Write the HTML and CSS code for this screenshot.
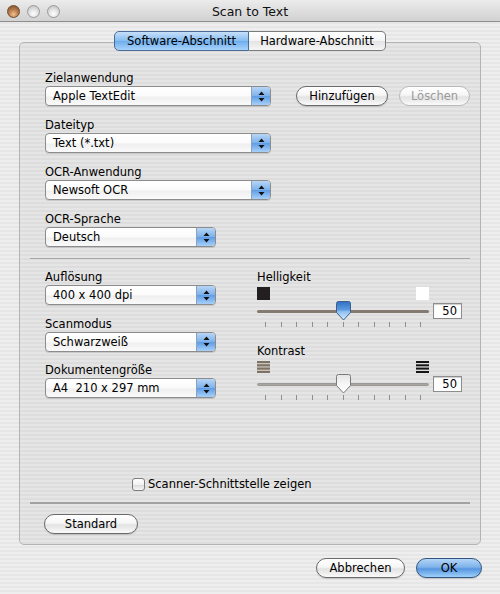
FILE: index.html
```html
<!DOCTYPE html>
<html lang="de">
<head>
<meta charset="utf-8">
<title>Scan to Text</title>
<link rel="stylesheet" href="styles.css">
</head>
<body>
<div class="window">
  <div class="titlebar">
    <div class="lights">
      <span class="light close"></span>
      <span class="light"></span>
      <span class="light"></span>
    </div>
    <div class="title">Scan to Text</div>
    <div></div>
  </div>
  <div class="content">
    <div class="tabs">
      <div class="tab active">Software-Abschnitt</div>
      <div class="tab">Hardware-Abschnitt</div>
    </div>
    <div class="panel">
      <section class="top">
        <div class="field">
          <div class="label">Zielanwendung</div>
          <div class="row">
            <div class="popup wide"><span class="ptext">Apple TextEdit</span><span class="parrow"><svg width="7" height="11" viewBox="0 0 7 11"><path d="M3.5 0.5 L6.5 4 H0.5Z M0.5 7 H6.5 L3.5 10.5Z" fill="#111"/></svg></span></div>
            <button class="btn add">Hinzufügen</button>
            <button class="btn del" disabled>Löschen</button>
          </div>
        </div>
        <div class="field">
          <div class="label">Dateityp</div>
          <div class="popup wide"><span class="ptext">Text (*.txt)</span><span class="parrow"><svg width="7" height="11" viewBox="0 0 7 11"><path d="M3.5 0.5 L6.5 4 H0.5Z M0.5 7 H6.5 L3.5 10.5Z" fill="#111"/></svg></span></div>
        </div>
        <div class="field">
          <div class="label">OCR-Anwendung</div>
          <div class="popup wide"><span class="ptext">Newsoft OCR</span><span class="parrow"><svg width="7" height="11" viewBox="0 0 7 11"><path d="M3.5 0.5 L6.5 4 H0.5Z M0.5 7 H6.5 L3.5 10.5Z" fill="#111"/></svg></span></div>
        </div>
        <div class="field">
          <div class="label">OCR-Sprache</div>
          <div class="popup narrow"><span class="ptext">Deutsch</span><span class="parrow"><svg width="7" height="11" viewBox="0 0 7 11"><path d="M3.5 0.5 L6.5 4 H0.5Z M0.5 7 H6.5 L3.5 10.5Z" fill="#111"/></svg></span></div>
        </div>
      </section>
      <div class="sep"></div>
      <section class="mid">
        <div class="leftcol">
          <div class="field">
            <div class="label">Auflösung</div>
            <div class="popup narrow"><span class="ptext">400 x 400 dpi</span><span class="parrow"><svg width="7" height="11" viewBox="0 0 7 11"><path d="M3.5 0.5 L6.5 4 H0.5Z M0.5 7 H6.5 L3.5 10.5Z" fill="#111"/></svg></span></div>
          </div>
          <div class="field">
            <div class="label">Scanmodus</div>
            <div class="popup narrow"><span class="ptext">Schwarzweiß</span><span class="parrow"><svg width="7" height="11" viewBox="0 0 7 11"><path d="M3.5 0.5 L6.5 4 H0.5Z M0.5 7 H6.5 L3.5 10.5Z" fill="#111"/></svg></span></div>
          </div>
          <div class="field">
            <div class="label">Dokumentengröße</div>
            <div class="popup narrow"><span class="ptext">A4&nbsp; 210 x 297 mm</span><span class="parrow"><svg width="7" height="11" viewBox="0 0 7 11"><path d="M3.5 0.5 L6.5 4 H0.5Z M0.5 7 H6.5 L3.5 10.5Z" fill="#111"/></svg></span></div>
          </div>
        </div>
        <div class="rightcol">
          <div class="slidergroup">
            <div class="label">Helligkeit</div>
            <div class="icons">
              <span class="sq black"></span>
              <span class="sq white"></span>
            </div>
            <div class="sliderrow">
              <div class="slider">
                <div class="track"></div>
                <svg class="thumb" width="15" height="20" viewBox="0 0 15 20">
                  <defs>
                    <linearGradient id="tb" x1="0" y1="0" x2="0" y2="1">
                      <stop offset="0" stop-color="#2f6fc4"/>
                      <stop offset="0.45" stop-color="#5d9be0"/>
                      <stop offset="0.55" stop-color="#8fc0f0"/>
                      <stop offset="1" stop-color="#d6ecff"/>
                    </linearGradient>
                  </defs>
                  <path d="M2.5 0.5 H12.5 Q14.5 0.5 14.5 2.5 V11.5 L7.5 19 L0.5 11.5 V2.5 Q0.5 0.5 2.5 0.5Z" fill="url(#tb)" stroke="#3d5f8a" stroke-width="1"/>
                </svg>
              </div>
              <div class="valbox">50</div>
            </div>
            <div class="ticks"><i></i><i></i><i></i><i></i><i></i><i></i><i></i><i></i><i></i><i></i><i></i></div>
          </div>
          <div class="slidergroup second">
            <div class="label">Kontrast</div>
            <div class="icons">
              <svg width="13" height="12" viewBox="0 0 13 12"><rect x="0" y="0" width="13" height="12" fill="#c9c1b5"/><rect x="0" y="0" width="13" height="2" fill="#7d7266"/><rect x="0" y="3.3" width="13" height="2" fill="#7d7266"/><rect x="0" y="6.6" width="13" height="2" fill="#7d7266"/><rect x="0" y="10" width="13" height="2" fill="#7d7266"/></svg>
              <svg width="13" height="12" viewBox="0 0 13 12"><rect x="0" y="0" width="13" height="2" fill="#151515"/><rect x="0" y="3.3" width="13" height="2" fill="#151515"/><rect x="0" y="6.6" width="13" height="2" fill="#151515"/><rect x="0" y="10" width="13" height="2" fill="#151515"/></svg>
            </div>
            <div class="sliderrow">
              <div class="slider">
                <div class="track light"></div>
                <svg class="thumb" width="15" height="20" viewBox="0 0 15 20">
                  <defs>
                    <linearGradient id="tw" x1="0" y1="0" x2="0" y2="1">
                      <stop offset="0" stop-color="#e4e4e4"/>
                      <stop offset="0.5" stop-color="#f6f6f6"/>
                      <stop offset="1" stop-color="#ffffff"/>
                    </linearGradient>
                  </defs>
                  <path d="M2.5 0.5 H12.5 Q14.5 0.5 14.5 2.5 V11.5 L7.5 19 L0.5 11.5 V2.5 Q0.5 0.5 2.5 0.5Z" fill="url(#tw)" stroke="#7a7a7a" stroke-width="1"/>
                </svg>
              </div>
              <div class="valbox">50</div>
            </div>
            <div class="ticks"><i></i><i></i><i></i><i></i><i></i><i></i><i></i><i></i><i></i><i></i><i></i></div>
          </div>
        </div>
      </section>
      <div class="checkrow">
        <span class="checkbox"></span>
        <span class="checklabel">Scanner-Schnittstelle zeigen</span>
      </div>
      <div class="sep thick"></div>
      <div class="stdrow">
        <button class="btn std">Standard</button>
      </div>
    </div>
    <div class="footer">
      <button class="btn cancel">Abbrechen</button>
      <button class="btn ok">OK</button>
    </div>
  </div>
</div>
</body>
</html>
```

FILE: styles.css
```css
* { box-sizing: border-box; }

html, body {
  margin: 0;
  padding: 0;
}

body {
  width: 500px;
  height: 594px;
  overflow: hidden;
}

.window {
  width: 500px;
  height: 594px;
  font-family: "DejaVu Sans", "Lucida Grande", sans-serif;
  font-size: 11.5px;
  color: #000;
  background: repeating-linear-gradient(to bottom, #eeeeee 0, #eeeeee 2px, #e6e6e6 2px, #e6e6e6 4px);
}

/* Title bar */
.titlebar {
  height: 22px;
  display: grid;
  grid-template-columns: 1fr auto 1fr;
  align-items: center;
  background: linear-gradient(to bottom, #ececec 0%, #dedede 50%, #d2d2d2 100%);
  border-bottom: 1px solid #8e8e8e;
}

.lights {
  display: flex;
  gap: 7px;
  padding-left: 7px;
  padding-top: 1px;
}

.light {
  width: 13px;
  height: 13px;
  border-radius: 50%;
  border: 1px solid #9a9a9a;
  background: radial-gradient(circle at 50% 70%, #ffffff 0%, #e6e6e6 40%, #b9b9b9 100%);
}

.light.close {
  border-color: #6f4a2e;
  background: radial-gradient(circle at 50% 75%, #f3c28d 0%, #b97e4e 45%, #7a4a28 100%);
}

.title {
  font-size: 12.5px;
  color: #111;
  padding-top: 1px;
}

/* Content */
.content {
  padding: 9px 19px 0 19px;
}

.tabs {
  display: flex;
  justify-content: center;
  margin-bottom: -9px;
  position: relative;
  z-index: 1;
}

.tab {
  height: 20px;
  line-height: 18px;
  padding: 0 11px;
  border: 1px solid #7b7b7b;
  background: linear-gradient(to bottom, #ffffff 0%, #f4f4f4 48%, #e4e4e4 52%, #f6f6f6 100%);
  font-size: 11.5px;
  text-align: center;
}

.tab:first-child {
  border-radius: 5px 0 0 5px;
}

.tab:last-child {
  border-radius: 0 5px 5px 0;
  border-left: none;
}

.tab.active {
  background: linear-gradient(to bottom, #c7e0fa 0%, #86bdf0 48%, #6eaeee 52%, #a9d3fb 100%);
  border-color: #4a6b96;
  width: 135px;
}

.tab:not(.active) {
  width: 137px;
}

.panel {
  height: 503px;
  border: 1px solid #b4b4b4;
  border-radius: 5px;
  background: rgba(0, 0, 0, 0.035);
  padding: 27px 10px 0 10px;
}

.label {
  height: 16px;
  line-height: 16px;
  margin-bottom: 0;
  white-space: nowrap;
}

.top {
  padding-left: 15px;
  display: flex;
  flex-direction: column;
  gap: 11px;
}

.row {
  display: flex;
  align-items: center;
}

/* Popup button */
.popup {
  height: 20px;
  display: flex;
  align-items: stretch;
  border: 1px solid #8c8c8c;
  border-radius: 4px;
  background: linear-gradient(to bottom, #ffffff 0%, #fbfbfb 50%, #efefef 55%, #fafafa 100%);
  box-shadow: 0 1px 0 rgba(0,0,0,0.12);
}

.popup.wide { width: 226px; }
.popup.narrow { width: 171px; }

.ptext {
  flex: 1;
  padding-left: 7px;
  line-height: 18px;
  white-space: nowrap;
}

.parrow {
  width: 19px;
  border-left: 1px solid #8aa2bf;
  border-radius: 0 3px 3px 0;
  background: linear-gradient(to bottom, #b7d6f6 0%, #7fb2ea 48%, #5f9de6 52%, #a7d0f8 100%);
  display: flex;
  align-items: center;
  justify-content: center;
}

/* Buttons */
.btn {
  height: 20px;
  border: 1px solid #6a6a6a;
  border-radius: 10px;
  background: linear-gradient(to bottom, #ffffff 0%, #f6f6f6 45%, #e2e2e2 55%, #fafafa 100%);
  font-family: inherit;
  font-size: 11.5px;
  color: #000;
  padding: 0;
  line-height: 17px;
  box-shadow: 0 1px 1px rgba(0,0,0,0.15);
}

.btn.add { width: 92px; margin-left: 25px; }
.btn.del {
  width: 71px;
  margin-left: 11px;
  color: #9a9a9a;
  border-color: #b9b9b9;
  box-shadow: none;
}

.sep {
  height: 1px;
  background: #a6a6a6;
  margin-top: 11px;
}

.sep.thick {
  height: 2px;
  background: #a2a2a2;
  margin-top: 10px;
}

/* Middle */
.mid {
  display: flex;
  padding-left: 15px;
  padding-top: 10px;
}

.leftcol {
  width: 212px;
  display: flex;
  flex-direction: column;
  gap: 10.5px;
}

.rightcol {
  width: 205px;
}

.icons {
  width: 172px;
  height: 13px;
  display: flex;
  justify-content: space-between;
  margin-top: 2px;
}

.sq {
  width: 13px;
  height: 13px;
}

.sq.black { background: #231f20; }
.sq.white { background: #ffffff; }

.sliderrow {
  display: flex;
  align-items: center;
  margin-top: 3px;
  height: 16px;
}

.slider {
  width: 172px;
  height: 16px;
  position: relative;
  display: flex;
  align-items: center;
}

.track {
  width: 100%;
  height: 3px;
  border-radius: 2px;
  background: #857a6f;
}

.track.light {
  background: #a9a49e;
}

.thumb {
  position: absolute;
  left: 79px;
  top: -2px;
}

.valbox {
  width: 29px;
  height: 16px;
  margin-left: 4px;
  background: #ffffff;
  border: 1px solid #8d8d8d;
  box-shadow: inset 0 1px 1px rgba(0,0,0,0.2);
  text-align: right;
  padding-right: 4px;
  line-height: 14px;
}

.ticks {
  width: 172px;
  display: flex;
  justify-content: space-between;
  padding: 0 8px;
  margin-top: 3px;
  height: 5px;
}

.ticks i {
  display: block;
  width: 1px;
  height: 5px;
  background: #8f8f8f;
}

.slidergroup.second {
  margin-top: 16px;
}

.slidergroup.second .icons {
  height: 12px;
}

.slidergroup.second .sliderrow {
  margin-top: 3px;
}

/* Checkbox */
.checkrow {
  display: flex;
  align-items: center;
  gap: 3px;
  padding-left: 102px;
  margin-top: 76px;
  height: 16px;
}

.checkbox {
  width: 13px;
  height: 13px;
  border: 1px solid #7d7d7d;
  border-radius: 3px;
  background: linear-gradient(to bottom, #ffffff 0%, #f2f2f2 50%, #dcdcdc 55%, #f6f6f6 100%);
}

.stdrow {
  padding-left: 14px;
  margin-top: 10px;
}

.btn.std { width: 94px; }

.footer {
  display: flex;
  justify-content: flex-end;
  gap: 11px;
  margin-top: 13px;
  margin-right: -1px;
}

.btn.cancel { width: 89px; }

.btn.ok {
  width: 66px;
  border-color: #34557f;
  background: linear-gradient(to bottom, #b3d5f7 0%, #7fb3ea 45%, #5696e0 55%, #9ed0fb 100%);
}
```
